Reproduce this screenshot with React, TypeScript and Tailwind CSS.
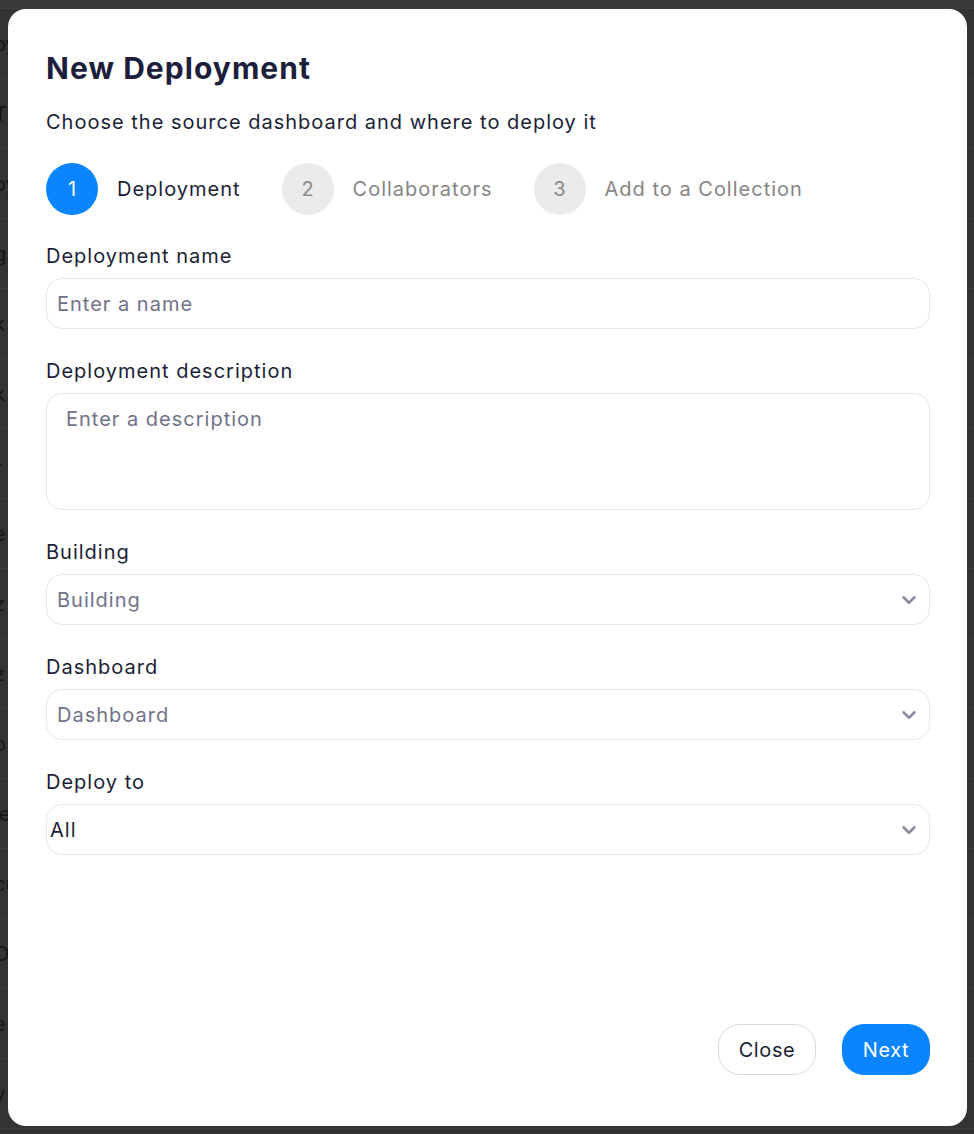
import React from "react";

const bgRows = ["oy", "T", "oy", "g", "k", "k", "-", "e", "z", "z", "o", "le", "cu", "O", "e", "y"];

const steps = [
  { n: 1, label: "Deployment", active: true },
  { n: 2, label: "Collaborators", active: false },
  { n: 3, label: "Add to a Collection", active: false },
];

const Chevron = () => (
  <svg width="22" height="22" viewBox="0 0 24 24" fill="none" stroke="#8b8ca0" strokeWidth="2.8" strokeLinecap="round" strokeLinejoin="round">
    <path d="M6 9l6 6 6-6" />
  </svg>
);

const Label = ({ text }: { text: string }) => (
  <label className="block text-[20px] leading-[28px] tracking-[0.05em] text-[#1b1e37] mb-2">{text}</label>
);

const SelectBox = ({ value, placeholder }: { value?: string; placeholder: string }) => (
  <div className="flex items-center justify-between h-[51px] rounded-2xl border border-[#e8e8ec] pl-[10px] pr-[9px]">
    {value ? (
      <span className="text-[20px] tracking-[0.05em] text-[#1b1e37] -ml-[7px]">{value}</span>
    ) : (
      <span className="text-[20px] tracking-[0.05em] text-[#70728a]">{placeholder}</span>
    )}
    <Chevron />
  </div>
);

export default function App() {
  return (
    <div className="relative w-[974px] h-[1134px] overflow-hidden bg-[#333333]" style={{ fontFamily: "Inter, 'Noto Sans', sans-serif" }}>
      {/* page behind the overlay */}
      <div className="h-[9px] bg-[#3a3a3a] border-b border-[#3e3e3e]" />
      <div className="flex flex-col">
        {bgRows.map((t, i) => (
          <div key={i} className="h-[70px] flex items-center border-b border-[#3c3c3c] -ml-[6px] text-[20px] text-[#161616]">
            {t}
          </div>
        ))}
      </div>

      {/* modal */}
      <div className="absolute left-[8px] top-[9px] w-[959px] h-[1117px] bg-white rounded-[18px] flex flex-col pt-[41px] pl-[38px] pr-[37px] pb-[51px]">
        <h1 className="text-[30px] leading-[36px] font-bold text-[#1c1e3b] tracking-[0.035em]">New Deployment</h1>
        <p className="mt-[22px] text-[20px] leading-[28px] tracking-[0.05em] text-[#1b1e37]">Choose the source dashboard and where to deploy it</p>

        <div className="mt-[27px] flex items-center gap-[41px]">
          {steps.map((s) => (
            <div key={s.n} className="flex items-center gap-[19px]">
              <div
                className={
                  s.active
                    ? "w-[52px] h-[52px] rounded-full bg-[#0a84ff] text-white flex items-center justify-center text-[20px]"
                    : "w-[52px] h-[52px] rounded-full bg-[#ebebeb] text-[#8a8a8a] flex items-center justify-center text-[20px]"
                }
              >
                {s.n}
              </div>
              <span className={s.active ? "text-[20px] tracking-[0.05em] text-[#1b1e37]" : "text-[20px] tracking-[0.05em] text-[#858585]"}>{s.label}</span>
            </div>
          ))}
        </div>

        <div className="flex-1 flex flex-col gap-[28px] mt-[27px]">
          <div>
            <Label text="Deployment name" />
            <div className="h-[51px] rounded-2xl border border-[#e8e8ec] flex items-center pl-[10px]">
              <span className="text-[20px] tracking-[0.05em] text-[#70728a]">Enter a name</span>
            </div>
          </div>
          <div>
            <Label text="Deployment description" />
            <div className="h-[117px] rounded-2xl border border-[#e8e8ec] pl-[19px] pt-[11px]">
              <span className="text-[20px] leading-[28px] tracking-[0.05em] text-[#70728a]">Enter a description</span>
            </div>
          </div>
          <div>
            <Label text="Building" />
            <SelectBox placeholder="Building" />
          </div>
          <div>
            <Label text="Dashboard" />
            <SelectBox placeholder="Dashboard" />
          </div>
          <div>
            <Label text="Deploy to" />
            <SelectBox placeholder="All" value="All" />
          </div>
        </div>

        <div className="flex justify-end gap-[26px]">
          <button className="h-[51px] w-[98px] rounded-[22px] border border-[#d9d9d9] text-[20px] tracking-[0.03em] text-[#1b1e37] bg-white">Close</button>
          <button className="h-[51px] w-[88px] rounded-[22px] bg-[#0a84ff] text-[20px] tracking-[0.03em] text-white">Next</button>
        </div>
      </div>
    </div>
  );
}
